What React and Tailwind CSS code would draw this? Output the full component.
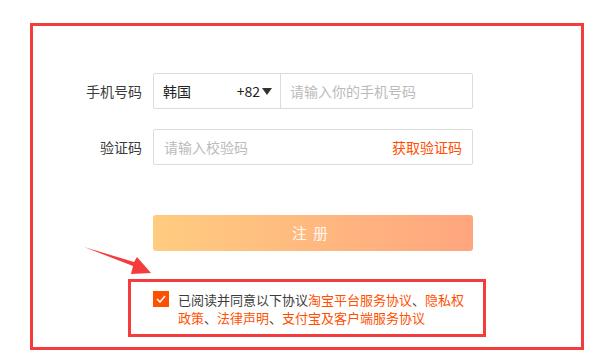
import React from 'react';

const cjk = { fontFamily: '"Noto Sans CJK SC", "Noto Sans", sans-serif' };

export default function App() {
    return (
        <div className="relative w-[614px] h-[362px] bg-white overflow-hidden" style={cjk}>
            <div className="absolute left-[30px] top-[23px] w-[554px] h-[327px] border-[3px] border-[#f53c3c]">
                <div className="flex flex-col pt-[47px]">
                    {/* phone row */}
                    <div className="flex items-center">
                        <label className="w-[109px] text-right text-[14px] text-[#3c3c3c] mr-[11px]">手机号码</label>
                        <div className="flex w-[320px] h-[36px] border border-[#dcdcdc] rounded-[2px]">
                            <div className="flex items-center w-[127px] border-r border-[#dcdcdc] pl-[9px] pr-[8px] text-[14px] text-[#222]">
                                <span className="flex-1">韩国</span>
                                <span>+82</span>
                                <svg width="10" height="8" viewBox="0 0 10 8" className="ml-[2px]">
                                    <path d="M0 1 L10 1 L5 8 Z" fill="#333" />
                                </svg>
                            </div>
                            <div className="flex items-center pl-[9px] text-[14px] text-[#bbbbbb]">请输入你的手机号码</div>
                        </div>
                    </div>

                    {/* code row */}
                    <div className="flex items-center mt-[20px]">
                        <label className="w-[109px] text-right text-[14px] text-[#3c3c3c] mr-[11px]">验证码</label>
                        <div className="flex items-center justify-between w-[320px] h-[36px] border border-[#dcdcdc] rounded-[2px] pl-[10px] pr-[10px]">
                            <span className="text-[14px] text-[#bbbbbb]">请输入校验码</span>
                            <span className="text-[14px] text-[#ff5000]">获取验证码</span>
                        </div>
                    </div>

                    {/* submit */}
                    <div className="flex mt-[50px] pl-[120px]">
                        <button className="w-[320px] h-[36px] rounded-[3px] bg-gradient-to-r from-[#ffcc80] to-[#ffa57f] text-white/90 text-[15px] tracking-[6px]">
                            注册
                        </button>
                    </div>

                    {/* agreement */}
                    <div className="flex mt-[28px] ml-[95px] w-[358px] h-[58px] border-[3px] border-[#f53c3c] pl-[22px] pt-[9px]">
                        <span className="flex items-center justify-center w-[16px] h-[16px] bg-[#ff5000] shrink-0">
                            <svg width="10" height="8" viewBox="0 0 10 8">
                                <path d="M1 4 L4 7 L9 1" fill="none" stroke="#fff" strokeWidth="1.6" />
                            </svg>
                        </span>
                        <p className="ml-[9px] w-[292px] text-[13px] leading-[18px] text-[#3c3c3c]">
                            已阅读并同意以下协议<span className="text-[#ff5000]">淘宝平台服务协议</span>、<span className="text-[#ff5000]">隐私权政策</span>、<span className="text-[#ff5000]">法律声明</span>、<span className="text-[#ff5000]">支付宝及客户端服务协议</span>
                        </p>
                    </div>
                </div>
            </div>

            {/* pointer arrow */}
            <svg className="absolute left-0 top-0" width="614" height="362" viewBox="0 0 614 362">
                <polygon points="84,247 134,262 137,257 151,273 131,274 133,266" fill="#f53c3c" />
            </svg>
        </div>
    );
}
